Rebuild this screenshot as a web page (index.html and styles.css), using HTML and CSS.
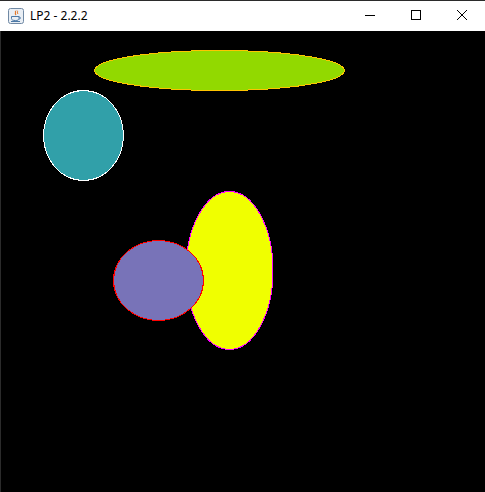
FILE: index.html
```html
<!DOCTYPE html>
<html>
<head>
<meta charset="utf-8">
<link rel="stylesheet" href="styles.css">
</head>
<body>
<div class="window">
  <div class="titlebar">
    <div class="title-left">
      <svg class="app-icon" width="16" height="16" viewBox="0 0 16 16">
        <rect x="0.5" y="0.5" width="15" height="15" rx="2" fill="#e9eef4" stroke="#7089a4"/>
        <path d="M7 3 C9 4 6 5 8 7" stroke="#e2782a" stroke-width="1.2" fill="none"/>
        <path d="M9 2.5 C10.5 3.5 8.5 4.5 10 6" stroke="#e2782a" stroke-width="1" fill="none"/>
        <path d="M3.5 8.5 H11 V10.5 C11 12 9.5 12.5 7.5 12.5 C5 12.5 3.5 12 3.5 10.5 Z" fill="none" stroke="#4d79a6" stroke-width="1"/>
        <path d="M11 9 C13 9 13 11 11 11" stroke="#4d79a6" stroke-width="1" fill="none"/>
        <path d="M3 13.5 H12" stroke="#4d79a6" stroke-width="1"/>
      </svg>
      <span class="title-text">LP2 - 2.2.2</span>
    </div>
    <div class="controls">
      <div class="ctl">
        <svg width="12" height="12" viewBox="0 0 12 12"><path d="M1 6.5 H11" stroke="#000" stroke-width="1"/></svg>
      </div>
      <div class="ctl">
        <svg width="12" height="12" viewBox="0 0 12 12"><rect x="1.5" y="1.5" width="9" height="9" fill="none" stroke="#000" stroke-width="1"/></svg>
      </div>
      <div class="ctl">
        <svg width="12" height="12" viewBox="0 0 12 12"><path d="M1 1 L11 11 M11 1 L1 11" stroke="#000" stroke-width="1"/></svg>
      </div>
    </div>
  </div>
  <div class="canvas">
    <svg class="drawing" width="484" height="461" viewBox="1 31 484 461">
      <ellipse cx="219.5" cy="70.5" rx="125" ry="20" fill="#92d900" stroke="#ffc400" stroke-width="1"/>
      <ellipse cx="83.5" cy="135.5" rx="40" ry="45" fill="#31a0a9" stroke="#ffffff" stroke-width="1"/>
      <ellipse cx="229.5" cy="270.5" rx="43.5" ry="79" fill="#f0ff00" stroke="#ff00ff" stroke-width="1"/>
      <ellipse cx="158.5" cy="280.5" rx="45" ry="40" fill="#7873b8" stroke="#ff0000" stroke-width="1"/>
    </svg>
  </div>
</div>
</body>
</html>
```
FILE: styles.css
```css
html, body {
  margin: 0;
  padding: 0;
  background: #000;
}
.window {
  width: 485px;
  height: 492px;
  display: flex;
  flex-direction: column;
  overflow: hidden;
}
.titlebar {
  height: 30px;
  border-top: 1px solid #2b2b2b;
  background: #fff;
  display: flex;
  justify-content: space-between;
  align-items: stretch;
  flex: none;
}
.title-left {
  display: flex;
  align-items: center;
  padding-left: 8px;
  gap: 6px;
}
.app-icon {
  display: block;
}
.title-text {
  font-family: "Noto Sans", "Liberation Sans", sans-serif;
  font-size: 12px;
  color: #000;
  position: relative;
  top: -1px;
}
.controls {
  display: flex;
}
.ctl {
  width: 46px;
  display: flex;
  align-items: center;
  justify-content: center;
}
.ctl svg {
  display: block;
  position: relative;
  top: -1px;
}
.canvas {
  flex: 1;
  background: #000;
  border-left: 1px solid #2b2b2b;
}
.drawing {
  display: block;
  shape-rendering: crispEdges;
}
```
